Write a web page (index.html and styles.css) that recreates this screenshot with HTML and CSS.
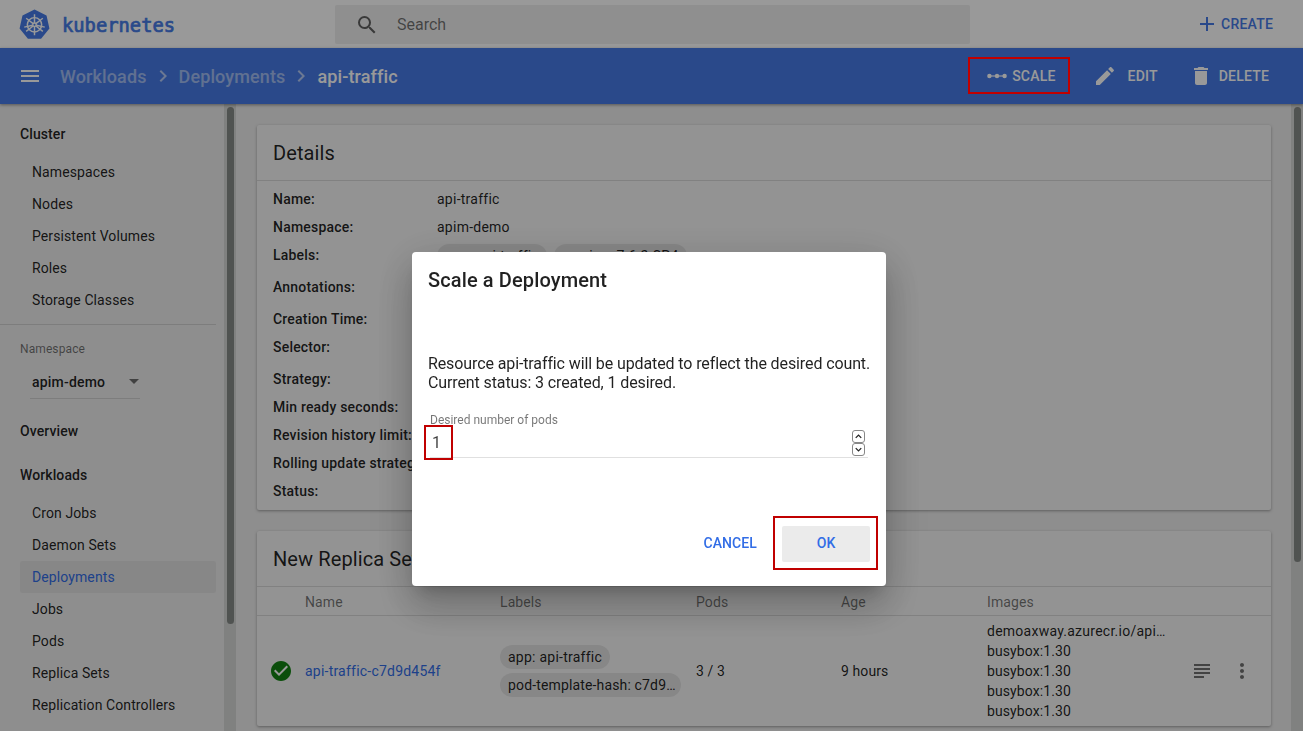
FILE: index.html
```html
<!DOCTYPE html>
<html lang="en">

<head>
  <meta charset="UTF-8">
  <title>Kubernetes Dashboard</title>
  <link rel="stylesheet" href="styles.css">
</head>

<body>
  <header class="topbar">
    <div class="brand">
      <svg class="logo" viewBox="0 0 32 32">
        <path fill="#467be6" d="M16 .6l12.4 6 3 13.4-8.6 10.8H9.2L.6 20l3-13.4z" />
        <g fill="none" stroke="#fff" stroke-width="1.5">
          <circle cx="16" cy="16.3" r="7.4" />
          <circle cx="16" cy="16.3" r="1.8" />
          <path d="M16 5.4v9M16 18.2v9M7.4 9.5l7.2 5.6M17.4 17.5l7.2 5.6M24.6 9.5l-7.2 5.6M14.6 17.5l-7.2 5.6M5.4 18.7l8.8-2M17.8 16.7l8.8 2" />
        </g>
      </svg>
      <span class="wordmark">kubernetes</span>
    </div>
    <div class="search">
      <svg class="icon search-icon" viewBox="0 0 24 24"><path d="M15.5 14h-.79l-.28-.27A6.471 6.471 0 0 0 16 9.5 6.5 6.5 0 1 0 9.5 16c1.61 0 3.09-.59 4.23-1.57l.27.28v.79l5 4.99L20.49 19l-4.99-5zm-6 0C7.01 14 5 11.99 5 9.5S7.01 5 9.5 5 14 7.01 14 9.5 11.99 14 9.5 14z" /></svg>
      <span>Search</span>
    </div>
    <button class="create" type="button">
      <svg class="icon" viewBox="0 0 24 24"><path d="M19 13h-6v6h-2v-6H5v-2h6V5h2v6h6v2z" /></svg>
      CREATE
    </button>
  </header>

  <div class="actionbar">
    <svg class="icon menu-icon" viewBox="0 0 24 24"><path d="M3 18h18v-2H3v2zm0-5h18v-2H3v2zm0-7v2h18V6H3z" /></svg>
    <nav class="crumbs">
      <span class="crumb">Workloads</span>
      <svg class="icon chevron" viewBox="0 0 24 24"><path d="M10 6L8.59 7.41 13.17 12l-4.58 4.59L10 18l6-6z" /></svg>
      <span class="crumb">Deployments</span>
      <svg class="icon chevron" viewBox="0 0 24 24"><path d="M10 6L8.59 7.41 13.17 12l-4.58 4.59L10 18l6-6z" /></svg>
      <span class="crumb crumb-current">api-traffic</span>
    </nav>
    <div class="actions">
      <button class="action action-scale" type="button">
        <svg class="scale-icon" viewBox="0 0 20 8">
          <path d="M2 4h16" stroke="currentColor" stroke-width="1.2" />
          <circle cx="2.4" cy="4" r="2.2" fill="currentColor" />
          <circle cx="10" cy="4" r="2.2" fill="currentColor" />
          <circle cx="17.6" cy="4" r="2.2" fill="currentColor" />
        </svg>
        SCALE
      </button>
      <button class="action action-edit" type="button">
        <svg class="icon" viewBox="0 0 24 24"><path d="M3 17.25V21h3.75L17.81 9.94l-3.75-3.75L3 17.25zM20.71 7.04c.39-.39.39-1.02 0-1.41l-2.34-2.34c-.39-.39-1.02-.39-1.41 0l-1.83 1.83 3.75 3.75 1.83-1.83z" /></svg>
        EDIT
      </button>
      <button class="action action-delete" type="button">
        <svg class="icon" viewBox="0 0 24 24"><path d="M6 19c0 1.1.9 2 2 2h8c1.1 0 2-.9 2-2V7H6v12zM19 4h-3.5l-1-1h-5l-1 1H5v2h14V4z" /></svg>
        DELETE
      </button>
    </div>
  </div>

  <div class="layout">
    <aside class="sidebar">
      <div class="sidenav">
        <div class="nav-title">Cluster</div>
        <a class="nav-item">Namespaces</a>
        <a class="nav-item">Nodes</a>
        <a class="nav-item">Persistent Volumes</a>
        <a class="nav-item">Roles</a>
        <a class="nav-item">Storage Classes</a>
        <div class="nav-divider"></div>
        <div class="ns-label">Namespace</div>
        <div class="ns-select">
          <span>apim-demo</span>
          <i class="ns-caret"></i>
        </div>
        <div class="nav-title nav-overview">Overview</div>
        <div class="nav-title nav-workloads">Workloads</div>
        <a class="nav-item">Cron Jobs</a>
        <a class="nav-item">Daemon Sets</a>
        <a class="nav-item nav-active">Deployments</a>
        <a class="nav-item">Jobs</a>
        <a class="nav-item">Pods</a>
        <a class="nav-item">Replica Sets</a>
        <a class="nav-item">Replication Controllers</a>
      </div>
      <div class="scrolltrack side-track"><div class="thumb side-thumb"></div></div>
    </aside>

    <main class="content">
      <div class="cards">
        <section class="card card-details">
          <h2 class="card-title">Details</h2>
          <div class="details">
            <div class="row"><b>Name:</b><span>api-traffic</span></div>
            <div class="row"><b>Namespace:</b><span>apim-demo</span></div>
            <div class="row"><b>Labels:</b><span class="chips"><span class="chip">app: api-traffic</span><span class="chip">version: 7.6.2-SP4</span></span></div>
            <div class="row row-tall"><b>Annotations:</b></div>
            <div class="row row-tall"><b>Creation Time:</b></div>
            <div class="row"><b>Selector:</b></div>
            <div class="row row-tall"><b>Strategy:</b></div>
            <div class="row"><b>Min ready seconds:</b></div>
            <div class="row"><b>Revision history limit:</b></div>
            <div class="row"><b>Rolling update strategy:</b></div>
            <div class="row"><b>Status:</b></div>
          </div>
        </section>

        <section class="card card-replicas">
          <h2 class="card-title">New Replica Set</h2>
          <div class="table-head table-cols">
            <span></span><span>Name</span><span>Labels</span><span>Pods</span><span>Age</span><span>Images</span>
          </div>
          <div class="table-row table-cols">
            <svg class="status-ok" viewBox="2 2 20 20">
              <circle cx="12" cy="12" r="8" fill="#fff" />
              <path d="M12 2C6.48 2 2 6.48 2 12s4.48 10 10 10 10-4.48 10-10S17.52 2 12 2zm-2 15l-5-5 1.41-1.41L10 14.17l7.59-7.59L19 8l-9 9z" />
            </svg>
            <a class="rs-link">api-traffic-c7d9d454f</a>
            <div class="row-chips">
              <span class="chip">app: api-traffic</span>
              <span class="chip chip-cut">pod-template-hash: c7d9d454f</span>
            </div>
            <span>3 / 3</span>
            <span>9 hours</span>
            <div class="images">
              <span class="image-first">demoaxway.azurecr.io/apim-demo</span>
              <span>busybox:1.30</span>
              <span>busybox:1.30</span>
              <span>busybox:1.30</span>
              <span>busybox:1.30</span>
            </div>
            <svg class="icon row-icon" viewBox="0 0 24 24"><path d="M14 17H4v2h10v-2zm6-8H4v2h16V9zM4 15h16v-2H4v2zM4 5v2h16V5H4z" /></svg>
            <svg class="icon row-icon" viewBox="0 0 24 24"><path d="M12 8c1.1 0 2-.9 2-2s-.9-2-2-2-2 .9-2 2 .9 2 2 2zm0 2c-1.1 0-2 .9-2 2s.9 2 2 2 2-.9 2-2-.9-2-2-2zm0 6c-1.1 0-2 .9-2 2s.9 2 2 2 2-.9 2-2-.9-2-2-2z" /></svg>
          </div>
        </section>
      </div>
      <div class="scrolltrack main-track"><div class="thumb main-thumb"></div></div>
    </main>
  </div>

  <div class="scrim"></div>

  <div class="dialog">
    <h2 class="dialog-title">Scale a Deployment</h2>
    <p class="dialog-text">Resource api-traffic will be updated to reflect the desired count.<br>Current status: 3 created, 1 desired.</p>
    <div class="field">
      <label class="field-label">Desired number of pods</label>
      <div class="field-input">
        <span class="field-value">1</span>
        <span class="spinner">
          <i class="spin-btn"><svg viewBox="0 0 12 12"><path d="M3 7.5L6 4.5l3 3" /></svg></i>
          <i class="spin-btn"><svg viewBox="0 0 12 12"><path d="M3 4.5L6 7.5l3-3" /></svg></i>
        </span>
      </div>
    </div>
    <div class="dialog-actions">
      <button class="btn-cancel" type="button">CANCEL</button>
      <button class="btn-ok" type="button">OK</button>
    </div>
  </div>
</body>

</html>
```

FILE: styles.css
```css
* {
  box-sizing: border-box;
}

html,
body {
  height: 100%;
}

body {
  margin: 0;
  overflow: hidden;
  font-family: Roboto, "Liberation Sans", sans-serif;
  font-size: 14px;
  letter-spacing: .1px;
  color: rgba(0, 0, 0, .87);
  background-color: #ededed;
  text-rendering: optimizeSpeed;
}

button {
  font-family: inherit;
  text-rendering: inherit;
  border: none;
  background: none;
  padding: 0;
}

.icon {
  width: 24px;
  height: 24px;
  fill: currentColor;
  flex: none;
}

/* top white bar */
.topbar {
  height: 48px;
  display: flex;
  align-items: center;
  background-color: #fff;
}

.brand {
  width: 335px;
  display: flex;
  align-items: center;
  padding-left: 19px;
}

.logo {
  width: 31px;
  height: 31px;
}

.wordmark {
  margin: 2px 0 0 12px;
  font-family: "DejaVu Sans Mono", monospace;
  font-size: 18.8px;
  letter-spacing: 0;
  color: #467be6;
  -webkit-text-stroke: .7px #467be6;
}

.search {
  width: 635px;
  height: 39px;
  margin-top: 1px;
  display: flex;
  align-items: center;
  padding-left: 20px;
  background-color: #eee;
  border-radius: 2px;
  font-size: 16px;
  letter-spacing: 0;
  color: rgba(0, 0, 0, .54);
}

.search-icon {
  margin-right: 18px;
  color: rgba(0, 0, 0, .6);
}

.create {
  margin-left: auto;
  margin-right: 30px;
  display: flex;
  align-items: center;
  gap: 2px;
  font-size: 14px;
  font-weight: 500;
  letter-spacing: .2px;
  color: #467be6;
}

/* blue bar */
.actionbar {
  height: 56px;
  display: flex;
  align-items: center;
  padding-left: 18px;
  background-color: #467be6;
  color: #fff;
  box-shadow: 0 1px 3px rgba(0, 0, 0, .4);
  position: relative;
}

.menu-icon {
  margin-right: 18px;
}

.crumbs {
  display: flex;
  align-items: center;
  font-size: 18px;
  font-weight: 500;
  letter-spacing: .12px;
}

.crumb {
  color: rgba(255, 255, 255, .5);
}

.crumb-current {
  color: #fff;
}

.chevron {
  margin: 0 4px;
  color: rgba(255, 255, 255, .6);
}

.actions {
  margin-left: auto;
  display: flex;
  align-items: center;
  height: 37px;
}

.action {
  display: flex;
  align-items: center;
  font-size: 14px;
  font-weight: 500;
  letter-spacing: .2px;
  color: #fff;
  position: relative;
}

.action-scale {
  gap: 5px;
  margin-right: 37px;
}

.action-edit {
  gap: 11px;
  margin-right: 31px;
}

.action-delete {
  gap: 6px;
  margin-right: 34px;
}

.scale-icon {
  width: 20px;
  height: 8px;
}

/* sits above the scrim, the red markers are not dimmed */
.action-scale::after {
  content: "";
  position: absolute;
  left: -19px;
  right: -14px;
  top: -11px;
  bottom: -10px;
  border: 2px solid #c00000;
  z-index: 20;
}

/* page */
.layout {
  height: 627px;
  display: flex;
}

.sidebar {
  width: 236px;
  flex: none;
  display: flex;
  overflow: hidden;
}

.sidenav {
  width: 224px;
  flex: none;
  padding-top: 18px;
  font-size: 14px;
}

.nav-title {
  height: 24px;
  padding-left: 20px;
  line-height: 24px;
  font-weight: 500;
}

.nav-item {
  display: block;
  height: 32px;
  line-height: 32px;
  margin: 0 8px 0 20px;
  padding-left: 12px;
  border-radius: 2px;
}

.nav-title + .nav-item {
  margin-top: 10px;
}

.nav-active {
  color: #326de6;
  background-color: #e2e2e2;
}

.nav-divider {
  height: 1px;
  margin: 8px 8px 0 0;
  background-color: rgba(0, 0, 0, .12);
}

.ns-label {
  margin: 17px 0 0 20px;
  font-size: 12px;
  color: rgba(0, 0, 0, .54);
}

.ns-select {
  width: 110px;
  height: 34px;
  margin: 9px 0 0 30px;
  padding: 0 0 0 2px;
  display: flex;
  align-items: center;
  justify-content: space-between;
  border-bottom: 1px solid rgba(0, 0, 0, .12);
  font-weight: 500;
  letter-spacing: .2px;
}

.ns-caret {
  width: 0;
  height: 0;
  margin-right: 1px;
  border-left: 5px solid transparent;
  border-right: 5px solid transparent;
  border-top: 5px solid rgba(0, 0, 0, .54);
}

.nav-overview {
  margin-top: 20px;
}

.nav-workloads {
  margin-top: 20px;
}

.scrolltrack {
  width: 12px;
  flex: none;
  background-color: #d5d8d6;
  padding: 3px 2px 0 3px;
}

.thumb {
  background-color: #868a87;
  border-radius: 4px;
}

.side-thumb {
  height: 517px;
}

.main-thumb {
  height: 455px;
}

.content {
  flex: 1;
  display: flex;
  min-width: 0;
}

.cards {
  flex: 1;
  padding: 21px 20px 0 21px;
  display: flex;
  flex-direction: column;
  gap: 21px;
  min-width: 0;
}

.card {
  background-color: #f6f6f6;
  box-shadow: 0 1px 3px rgba(0, 0, 0, .35);
  border-radius: 2px;
}

.card-details {
  height: 385px;
}

.card-replicas {
  height: 195px;
}

.card-title {
  margin: 0;
  height: 56px;
  padding-left: 16px;
  line-height: 56px;
  font-size: 20px;
  font-weight: 400;
  border-bottom: 1px solid rgba(0, 0, 0, .12);
}

.details {
  padding: 4px 16px 0;
}

.row {
  display: flex;
  height: 28px;
  line-height: 28px;
}

.row > span {
  letter-spacing: .25px;
}

.row-tall {
  height: 32px;
  line-height: 36px;
}

.row b {
  width: 164px;
  flex: none;
  font-weight: 500;
  letter-spacing: .2px;
}

.chips {
  display: flex;
  gap: 7px;
  padding-top: 3px;
}

.chip {
  display: inline-block;
  height: 24px;
  line-height: 24px;
  padding: 0 8px;
  border-radius: 12px;
  background-color: #e2e2e2;
  letter-spacing: .25px;
  white-space: nowrap;
}

.table-cols {
  display: grid;
  grid-template-columns: 48px 195px 196px 145px 146px 203px 40px 20px;
  align-items: center;
}

.table-head {
  height: 29px;
  padding-top: 1px;
  font-size: 14px;
  color: rgba(0, 0, 0, .54);
  border-bottom: 1px solid rgba(0, 0, 0, .12);
}

.table-row {
  height: 110px;
}

.status-ok {
  width: 20px;
  height: 20px;
  margin-left: 14px;
  fill: #138313;
}

.rs-link {
  color: #326de6;
  letter-spacing: .22px;
}

.row-chips {
  display: flex;
  flex-direction: column;
  align-items: flex-start;
  gap: 4px;
}

.chip-cut {
  max-width: 181px;
  padding-right: 0;
  letter-spacing: .15px;
  overflow: hidden;
  text-overflow: ellipsis;
}

.images {
  display: flex;
  flex-direction: column;
  line-height: 20px;
}

.image-first {
  max-width: 180px;
  overflow: hidden;
  text-overflow: ellipsis;
  white-space: nowrap;
  letter-spacing: .25px;
}

.row-icon {
  color: rgba(0, 0, 0, .54);
}

/* dialog */
.scrim {
  position: fixed;
  inset: 0;
  z-index: 10;
  background-color: rgba(0, 0, 0, .4);
}

.dialog {
  position: fixed;
  left: 412px;
  top: 252px;
  z-index: 11;
  width: 474px;
  height: 334px;
  padding: 16px 16px 24px;
  display: flex;
  flex-direction: column;
  background-color: #fff;
  border-radius: 4px;
  box-shadow: 0 11px 15px -7px rgba(0, 0, 0, .2), 0 24px 38px 3px rgba(0, 0, 0, .14), 0 9px 46px 8px rgba(0, 0, 0, .12);
}

.dialog-title {
  margin: 0;
  height: 24px;
  line-height: 24px;
  font-size: 20px;
  font-weight: 500;
  letter-spacing: .12px;
}

.dialog-text {
  margin: 62px 0 0;
  font-size: 16px;
  line-height: 19px;
  letter-spacing: -.11px;
  white-space: nowrap;
}

.field {
  margin: 21px 2px 0;
  width: 438px;
}

.field-label {
  display: block;
  font-size: 12px;
  line-height: 14px;
  letter-spacing: 0;
  color: rgba(0, 0, 0, .54);
}

.field-input {
  height: 31px;
  display: flex;
  align-items: center;
  justify-content: space-between;
  border-bottom: 1px solid rgba(0, 0, 0, .12);
  font-size: 16px;
}

/* markers drawn on top of the screenshot */
.field-value {
  position: relative;
  width: 29px;
  height: 35px;
  line-height: 31px;
  margin: 1px 0 0 -6px;
  padding-left: 6px;
  border: 2px solid #c00000;
  color: rgba(0, 0, 0, .75);
}

.spinner {
  display: flex;
  flex-direction: column;
  margin: 1px 3px 0 0;
}

.spin-btn {
  display: block;
  width: 13px;
  height: 13px;
  border: 1px solid #888;
  border-radius: 3px;
}

.spin-btn svg {
  display: block;
  width: 11px;
  height: 11px;
  fill: none;
  stroke: #222;
  stroke-width: 1.4;
}

.dialog-actions {
  margin-top: auto;
  display: flex;
  justify-content: flex-end;
  align-items: center;
  gap: 25px;
}

.btn-cancel,
.btn-ok {
  font-size: 14px;
  font-weight: 500;
  letter-spacing: .1px;
  padding-bottom: 2px;
  color: #326de6;
}

.btn-ok {
  position: relative;
  width: 88px;
  height: 36px;
  background-color: #ebebeb;
  border-radius: 2px;
}

.btn-ok::after {
  content: "";
  position: absolute;
  left: -9px;
  right: -8px;
  top: -10px;
  bottom: -8px;
  border: 2px solid #c00000;
}
```
